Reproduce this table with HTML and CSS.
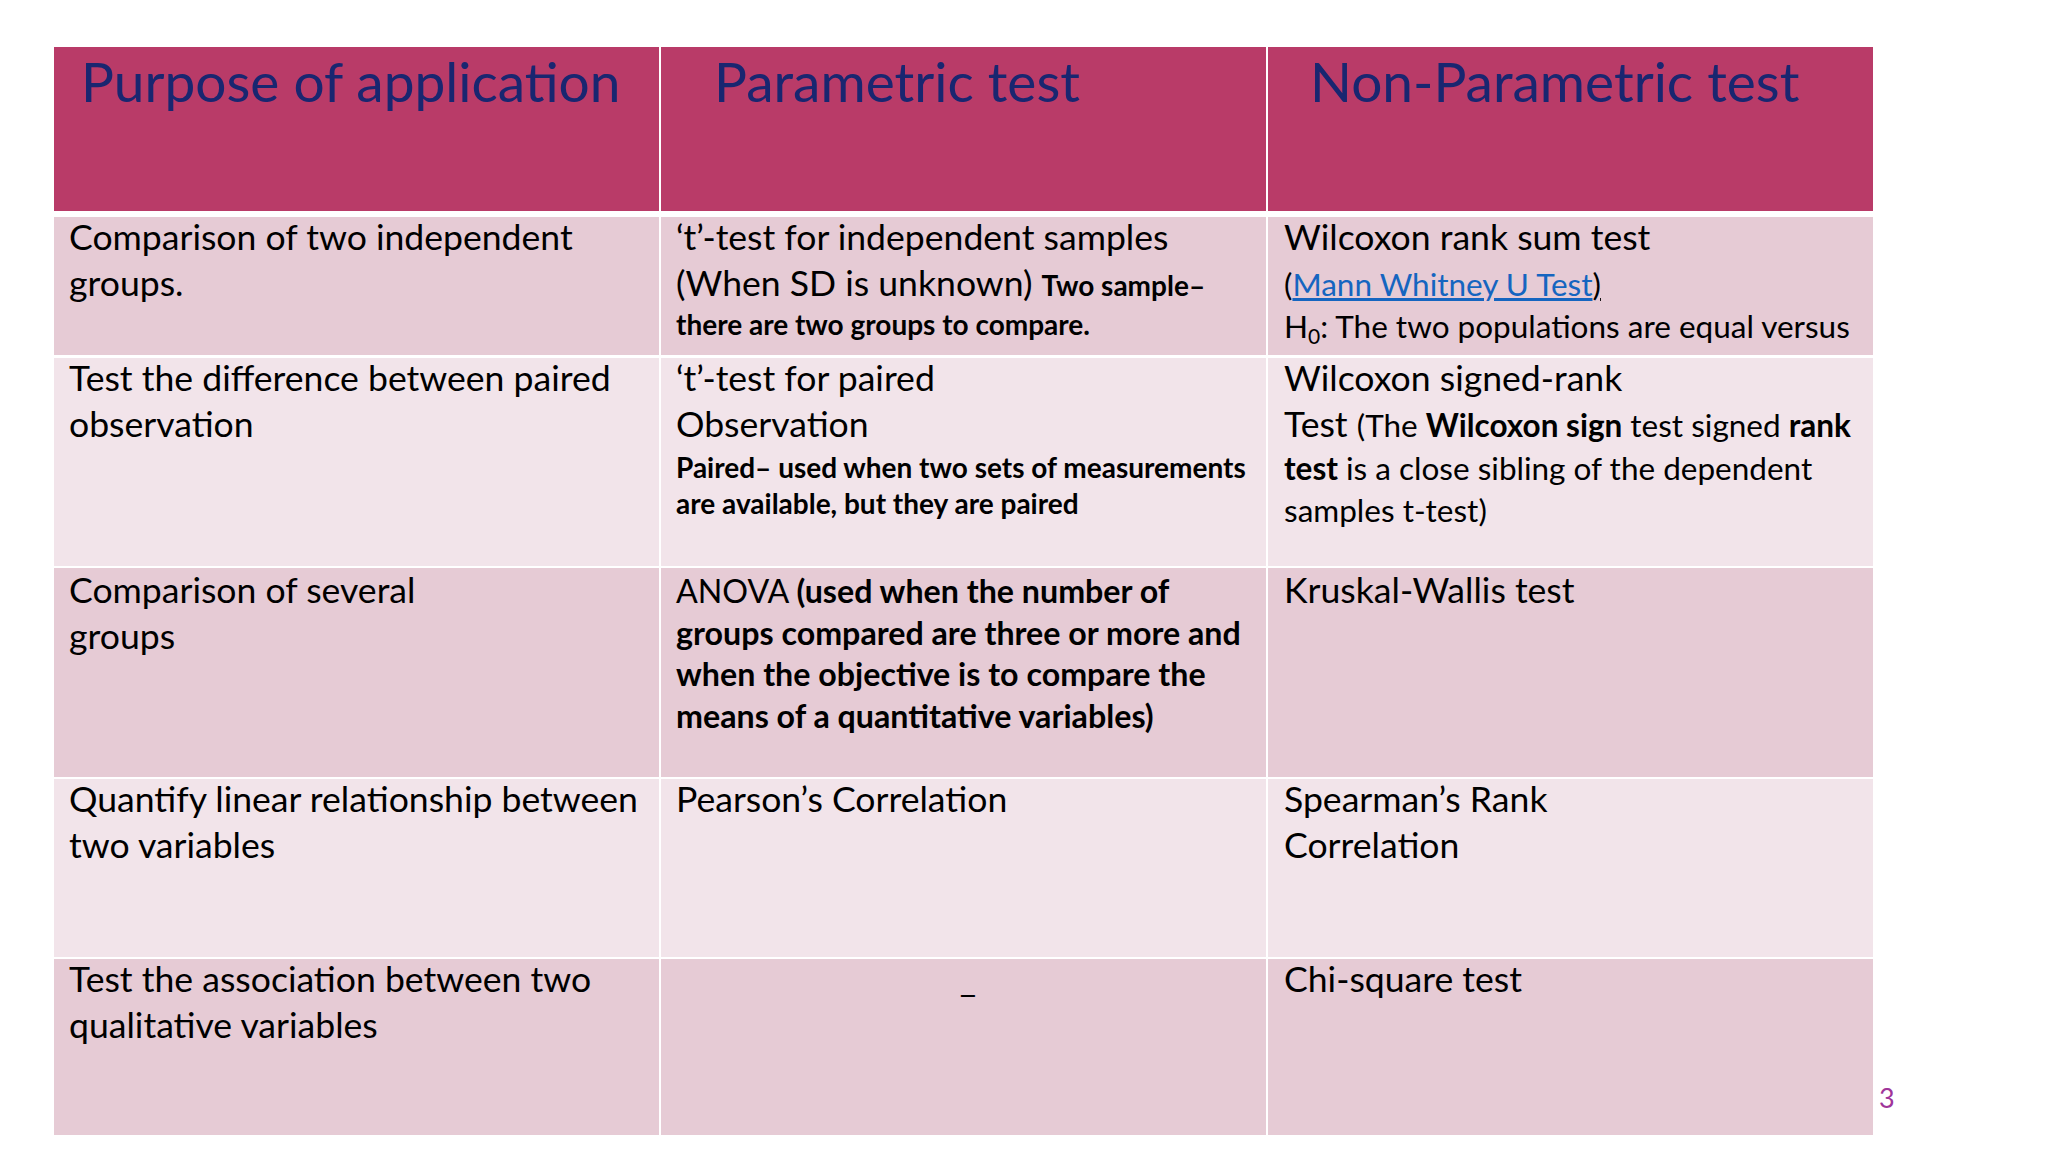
FILE: index.html
```html
<!DOCTYPE html>
<html lang="en">
<head>
<meta charset="utf-8">
<title>Parametric vs Non-Parametric tests</title>
<link rel="stylesheet" href="styles.css">
</head>
<body>
<div class="slide">
  <div class="table">
    <div class="row head">
      <div class="cell hc1">Purpose of application</div>
      <div class="cell hc2">Parametric test</div>
      <div class="cell hc3">Non-Parametric test</div>
    </div>

    <div class="row r1 odd">
      <div class="cell"><div class="txt">
        <div class="ln">Comparison of two independent</div>
        <div class="ln">groups.</div>
      </div></div>
      <div class="cell"><div class="txt">
        <div class="ln">‘t’-test for independent samples</div>
        <div class="ln">(When SD is unknown) <b class="sm">Two sample–</b></div>
        <div class="lsm"><b>there are two groups to compare.</b></div>
      </div></div>
      <div class="cell c3"><div class="txt">
        <div class="ln">Wilcoxon rank sum test</div>
        <div class="lmd l49">(<a class="link">Mann Whitney U Test</a><u>)</u></div>
        <div class="lmd l35">H<sub>0</sub>: The two populations are equal versus</div>
      </div></div>
    </div>

    <div class="row r2 even">
      <div class="cell"><div class="txt">
        <div class="ln">Test the difference between paired</div>
        <div class="ln">observation</div>
      </div></div>
      <div class="cell"><div class="txt">
        <div class="ln">‘t’-test for paired</div>
        <div class="ln">Observation</div>
        <div class="lsm l40"><b>Paired– used when two sets of measurements</b></div>
        <div class="lsm"><b>are available, but they are paired</b></div>
      </div></div>
      <div class="cell c3"><div class="txt">
        <div class="ln">Wilcoxon signed-rank</div>
        <div class="ln">Test <span class="md">(The <b>Wilcoxon sign</b> test signed <b>rank</b></span></div>
        <div class="lmd"><b>test</b> is a close sibling of the dependent</div>
        <div class="lmd">samples t-test)</div>
      </div></div>
    </div>

    <div class="row r3 odd">
      <div class="cell"><div class="txt">
        <div class="ln">Comparison of several</div>
        <div class="ln">groups</div>
      </div></div>
      <div class="cell anova"><div class="txt">
        <div class="lmd">ANOVA <b>(used when the number of</b></div>
        <div class="lmd"><b>groups compared are three or more and</b></div>
        <div class="lmd"><b>when the objective is to compare the</b></div>
        <div class="lmd"><b>means of a quantitative variables)</b></div>
      </div></div>
      <div class="cell c3"><div class="txt">
        <div class="ln">Kruskal-Wallis test</div>
      </div></div>
    </div>

    <div class="row r4 even">
      <div class="cell"><div class="txt">
        <div class="ln">Quantify linear relationship between</div>
        <div class="ln">two variables</div>
      </div></div>
      <div class="cell"><div class="txt">
        <div class="ln">Pearson’s Correlation</div>
      </div></div>
      <div class="cell c3"><div class="txt">
        <div class="ln">Spearman’s Rank</div>
        <div class="ln">Correlation</div>
      </div></div>
    </div>

    <div class="row r5 odd">
      <div class="cell"><div class="txt">
        <div class="ln">Test the association between two</div>
        <div class="ln">qualitative variables</div>
      </div></div>
      <div class="cell"><div class="txt">
        <div class="ln center">_</div>
      </div></div>
      <div class="cell c3"><div class="txt">
        <div class="ln">Chi-square test</div>
      </div></div>
    </div>
  </div>
  <div class="page-num">3</div>
</div>
</body>
</html>
```
FILE: styles.css
```css
html, body {
  margin: 0;
  padding: 0;
  background: #ffffff;
}

.slide {
  position: relative;
  width: 2048px;
  height: 1152px;
  box-sizing: border-box;
  padding: 47px 0 0 54px;
  font-family: Lato, "Open Sans", sans-serif;
  color: #000;
}

.table {
  display: flex;
  flex-direction: column;
  width: 1819px;
}

.row {
  display: grid;
  grid-template-columns: 605px 605px 605px;
  column-gap: 2px;
}

.head { height: 164px; margin-bottom: 6px; }
.r1 { height: 138px; margin-bottom: 3px; }
.r2 { height: 208px; margin-bottom: 2px; }
.r3 { height: 209px; margin-bottom: 2px; }
.r4 { height: 178px; margin-bottom: 2px; }
.r5 { height: 176px; }

.head .cell { background: #b93b68; }
.odd .cell { background: #e6cbd5; }
.even .cell { background: #f2e4ea; }

.cell {
  box-sizing: border-box;
  padding: 0 6px 0 15px;
  font-size: 35.6px;
  line-height: 46px;
}

.cell.c3 { padding-left: 16px; }
.r3 .cell { padding-top: 2px; }
.cell.anova { font-size: 32.2px; }
.cell.anova .lmd { font-size: 32.2px; }

.head .cell {
  font-size: 55px;
  line-height: 60px;
  padding-top: 4px;
  color: #192670;
  white-space: nowrap;
}
.head .hc1 { padding-left: 27px; }
.head .hc2 { padding-left: 53px; }
.head .hc3 { padding-left: 42px; }

.ln { white-space: nowrap; }
.ln:first-child {
  line-height: 40px;
  margin-bottom: 3px;
}
.center { text-align: center; }

.sm { font-size: 28px; font-weight: 700; }
.lsm {
  font-size: 28px;
  line-height: 32px;
  white-space: nowrap;
}
.lsm.l40 { line-height: 40px; }

.md { font-size: 31.5px; }
.lmd {
  font-size: 31.5px;
  line-height: 41.5px;
  white-space: nowrap;
}
.lmd.l49 { line-height: 49px; }
.lmd.l35 { line-height: 35px; }

b { font-weight: 700; }

.link {
  color: #1565c0;
  text-decoration: underline;
}

sub {
  font-size: 21px;
  line-height: 0;
  vertical-align: -6px;
}

.page-num {
  position: absolute;
  left: 1879px;
  top: 1082px;
  font-size: 27px;
  line-height: 32px;
  color: #a0359a;
}
```
